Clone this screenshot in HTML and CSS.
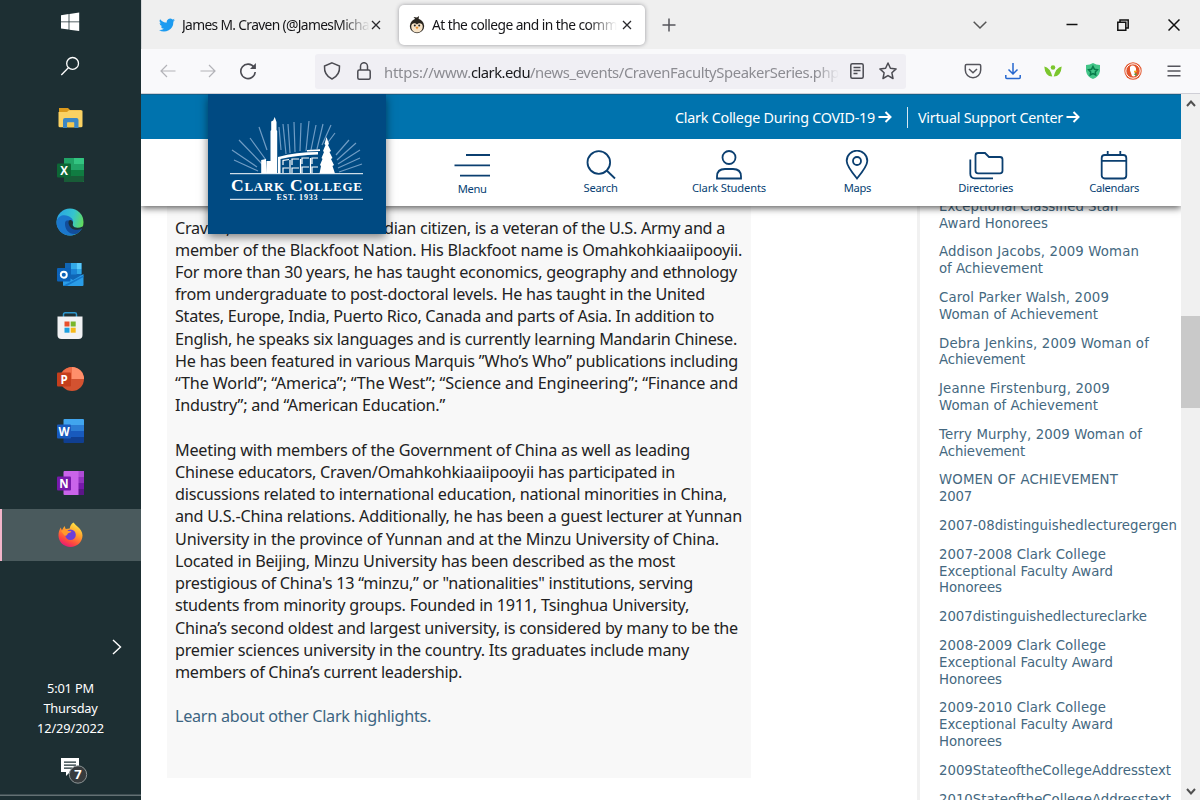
FILE: index.html
```html
<!DOCTYPE html>
<html lang="en">
<head>
<meta charset="utf-8">
<title>At the college and in the community</title>
<link rel="stylesheet" href="styles.css">
</head>
<body>
<div class="desktop">
  <aside class="taskbar">
    <div class="sys"><svg width="20" height="20" viewBox="0 0 20 20"><path fill="#fff" d="M1 3.200 8.600 2v7.400H1zM9.400 1.900 19.200.6v8.800H9.400zM1 10.200h7.600v7.400L1 16.600zM9.400 10.200h9.800v8.900l-9.800-1.300z"/></svg></div>
    <div class="sys"><svg width="20" height="20" viewBox="0 0 20 20" fill="none" stroke="#fff" stroke-width="1.300"><circle cx="12.600" cy="7.400" r="5.900"/><path d="M8.400 11.800 1.300 19"/></svg></div>
    <div class="apps">
      <div class="app"><svg width="28" height="28" viewBox="0 0 28 28"><path fill="#dc9a1c" d="M3 4h9l2 2h11v3H3z"/><path fill="#fbd263" d="M2.500 8h8.500l2-1.800h12.500q1 0 1 1V22q0 1.300-1.500 1.300H4Q2.500 23.300 2.500 22z"/><path fill="#3c87c5" d="M7 24v-8q0-2 2-2h11.500q2 0 2 2v8h-4.300v-5.500h-7V24z"/><path fill="#f6c94f" d="M11.500 18.500h6.500v4.800h-6.500z"/></svg></div>
      <div class="app"><svg width="28" height="28" viewBox="0 0 28 28"><path fill="#21a366" d="M8 2h20v24H8z"/><path fill="#33c481" d="M18 2h9q1 0 1 1v5H18z"/><path fill="#107c41" d="M8 14h20v6H8z"/><path fill="#185c37" d="M8 20h20v5q0 1-1 1H8z"/><rect x="1" y="7.500" width="14" height="14" rx="1" fill="#0d6635"/><text x="8" y="18.500" class="letter">X</text></svg></div>
      <div class="app"><svg width="28" height="28" viewBox="0 0 28 28"><defs><linearGradient id="e1" x1="0" x2="1" y1=".3" y2=".6"><stop stop-color="#2aa5e3"/><stop offset=".55" stop-color="#35c4cf"/><stop offset="1" stop-color="#66dc54"/></linearGradient></defs><circle cx="14" cy="14" r="13.500" fill="url(#e1)"/><path fill="#1b77cc" d="M.6 13C2 7.500 8 6 12 8c5 2 5.500 5 5 7-1 3 2 5 5 5 2 0 3.500-.5 4.500-1.500C24 25 18.500 27.500 14 27.500 6 27.500 0 21 .6 13z"/><path fill="#124d9a" d="M9 15c-.5 6 4 12 11 11 4-1.500 6.300-5.500 6.500-7-2.500 1.800-7 2.500-10 .5-2.500-1.700-3.500-4.500-2-7-3-.5-5.300 0-5.500 2.500z"/><path fill="#1d3035" d="M12.500 14.500c0-2 1.600-3 3.200-2 1.500 1 1.500 2.500 1 3.700-.4 1.500 1 3 3 3.400q4 .6 6.800-1.200l1 .8q-3 3.200-8 2.500c-4-.5-7-3.500-7-7.200z"/></svg></div>
      <div class="app"><svg width="28" height="28" viewBox="0 0 28 28"><path fill="#1066b5" d="M9 3h16.500V20H9z"/><path fill="#32a9e7" d="M15 3h5.500v6H15zM20.500 9h5v5h-5z"/><path fill="#5bcbfa" d="M20.500 3h5v6h-5z"/><path fill="#1b84d6" d="M15 9h5.500v5.500H15z"/><path fill="#2a9de8" d="M7 14.500 17 20l10.500-6V25q0 1-1 1H8q-1 0-1-1z"/><path fill="#1478cb" d="m7.500 25.500 20-10V17L11 26H8z"/><rect x="1" y="8" width="13.500" height="13.500" rx="1" fill="#0c62b8"/><circle cx="7.800" cy="14.700" r="3" fill="none" stroke="#fff" stroke-width="1.900"/></svg></div>
      <div class="app"><svg width="28" height="28" viewBox="0 0 28 28"><path d="M7.500 5V2.500q0-1.700 1.700-1.700h9.600q1.700 0 1.700 1.700V5" fill="none" stroke="#2d97ce" stroke-width="1.500"/><path fill="#f1f2f4" d="M1.500 4.500h25V23q0 4-4 4h-17q-4 0-4-4z"/><path fill="#e8502d" d="M8.500 9.500h5v5h-5z"/><path fill="#78b62c" d="M14.700 9.500h5v5h-5z"/><path fill="#1da0df" d="M8.500 15.700h5v5h-5z"/><path fill="#f5b91b" d="M14.700 15.700h5v5h-5z"/></svg></div>
      <div class="app"><svg width="28" height="28" viewBox="0 0 28 28"><circle cx="16" cy="14" r="12" fill="#d35230"/><path fill="#ff8f6b" d="M16 2a12 12 0 0 1 12 12H16z"/><path fill="#ed6c47" d="M16 2A12 12 0 0 0 4 14h12z"/><rect x="1" y="7.500" width="14" height="14" rx="1" fill="#c43e1c"/><text x="8" y="18.500" class="letter">P</text></svg></div>
      <div class="app"><svg width="28" height="28" viewBox="0 0 28 28"><path fill="#41a5ee" d="M7.500 3q0-1 1-1H27q1 0 1 1v5H7.500z"/><path fill="#2b7cd3" d="M7.500 8H28v6H7.500z"/><path fill="#185abd" d="M7.500 14H28v6H7.500z"/><path fill="#103f91" d="M7.500 20H28v5q0 1-1 1H8.500q-1 0-1-1z"/><rect x="1" y="7.500" width="14" height="14" rx="1" fill="#185abd"/><text x="8" y="18.500" class="letter">W</text></svg></div>
      <div class="app"><svg width="28" height="28" viewBox="0 0 28 28"><rect x="7.500" y="2" width="20.500" height="24" rx="1" fill="#ca64ea"/><path fill="#ae4bd5" d="M22.500 2H27q1 0 1 1v5h-5.500z"/><path fill="#9332bf" d="M22.500 8H28v6h-5.500z"/><path fill="#7719aa" d="M22.500 14H28v6h-5.500z"/><path fill="#5c1589" d="M22.500 20H28v6h-5.500z"/><rect x="1" y="7.500" width="14" height="14" rx="1" fill="#7719aa"/><text x="8" y="18.500" class="letter">N</text></svg></div>
      <div class="app active"><svg width="28" height="28" viewBox="0 0 28 28"><defs><linearGradient id="f1" x1=".8" y1="0" x2=".3" y2="1"><stop stop-color="#fff04a"/><stop offset=".4" stop-color="#ffa22c"/><stop offset=".75" stop-color="#ff4b3d"/><stop offset="1" stop-color="#e3167b"/></linearGradient></defs><path fill="url(#f1)" d="M17.500 1.500c1.500 2 3 3 4.500 4.500 2.500 2 4.500 5 4.500 8.500C26.500 21 21 26 14.500 26S2.500 21 2.500 14.500c0-3 .7-5.500 2.200-8l1.200 2.700L8.500 5l1.200 3 4-.5c.3-2.500 1.700-5 3.800-6z"/><circle cx="14.500" cy="13.800" r="5.300" fill="#6a3fd8"/><path fill="#ff9a2d" d="M5 10c3-2 5.500-1.500 7.500 0l3 .3c-.5 1.700-3.500 1.500-4 2.700-.3 1.500-1.500 2-3 1.500z"/></svg></div>
    </div>
    <div class="more"><svg width="12" height="18" viewBox="0 0 12 18" fill="none" stroke="#fff" stroke-width="1.400"><path d="m2 2 7.500 7L2 16"/></svg></div>
    <div class="clock"><span data-w="47">5:01 PM</span><span data-w="54">Thursday</span><span data-w="67">12/29/2022</span></div>
    <div class="notes"><svg width="30" height="30" viewBox="0 0 30 30"><path fill="#fff" d="M3 1h18v14h-9l-4 4v-4H3z"/><path stroke="#1d3035" stroke-width="1.200" d="M6 5.100h12M6 8.100h12M6 11.100h8"/><circle cx="20" cy="17.500" r="8.700" fill="#373b3d" stroke="#8c9495"/><text x="20" y="22" class="badge">7</text></svg></div>
  </aside>

  <main class="browser">
    <div class="tabs">
      <div class="tab">
        <svg width="16" height="16" viewBox="0 0 24 24"><path fill="#1d9bf0" d="M24 4.600a10 10 0 0 1-2.800.8 5 5 0 0 0 2.100-2.700 10 10 0 0 1-3.100 1.200 4.900 4.900 0 0 0-8.400 4.500A14 14 0 0 1 1.700 3.200a4.900 4.900 0 0 0 1.500 6.500 5 5 0 0 1-2.200-.6 4.900 4.900 0 0 0 3.900 4.900 5 5 0 0 1-2.200.1 4.900 4.900 0 0 0 4.600 3.400A10 10 0 0 1 0 19.500 14 14 0 0 0 21.500 7a10 10 0 0 0 2.500-2.400z"/></svg>
        <div class="tab-title"><span data-w="187">James M. Craven (@JamesMicha</span></div>
        <svg class="x" width="10" height="10" viewBox="0 0 10 10"><path d="m1 1 8 8M9 1 1 9"/></svg>
      </div>
      <div class="tab current">
        <svg width="16" height="18" viewBox="0 0 16 18"><circle cx="8" cy="10" r="7.200" fill="#29251f"/><path fill="#29251f" d="M7 4 4.500 1 8 1.500 10 0l-.5 4z"/><path fill="#f6e3c8" d="M2.300 11C1.800 7 6 6 8 8.500 10 6 14.200 7 13.700 11c0 7.200-11.400 7.200-11.400 0z"/><circle cx="5.800" cy="9.600" r="1" fill="#222"/><circle cx="10.200" cy="9.600" r="1" fill="#222"/><path fill="#e99234" d="m6.500 11.300 1.500-.8 1.500.8L8 13.500z"/></svg>
        <div class="tab-title"><span data-w="185">At the college and in the comm</span></div>
        <svg class="x" width="10" height="10" viewBox="0 0 10 10"><path d="m1 1 8 8M9 1 1 9"/></svg>
      </div>
      <svg class="plus" width="14" height="14" viewBox="0 0 14 14"><path d="M7 .5v13M.5 7h13"/></svg>
      <div class="window-buttons">
        <svg width="14" height="14" viewBox="0 0 14 14" stroke="#555"><path d="m.7 3.700 6.300 6.300 6.300-6.300"/></svg>
        <svg width="12" height="14" viewBox="0 0 12 14"><path d="M.5 6.500h11" stroke-width="1.500"/></svg>
        <svg width="12" height="12" viewBox="0 0 12 12"><path d="M.8 3.300h8v8h-8zM3 3V.9h8.200v8.200H9"/></svg>
        <svg width="12" height="12" viewBox="0 0 12 12"><path d="m.5.5 11 11M11.500.5l-11 11"/></svg>
      </div>
    </div>

    <div class="toolbar">
      <div class="history">
        <svg width="16" height="14" viewBox="0 0 16 14" stroke="#b3b3b8"><path d="M15.500 7H1M7 1 1 7l6 6"/></svg>
        <svg width="16" height="14" viewBox="0 0 16 14" stroke="#b3b3b8"><path d="M.5 7H15M9 1l6 6-6 6"/></svg>
        <svg class="reload" width="18" height="18" viewBox="0 0 18 18" stroke="#4b4b52"><path d="M15 5.300A7.200 7.200 0 1 0 16.200 10"/><path fill="#4b4b52" stroke="none" d="M16.900 1v6H11z"/></svg>
      </div>
      <div class="address">
        <svg width="18" height="18" viewBox="0 0 18 18"><path d="M9 .9 16.500 4c.4 6-2 10.500-7.500 13C3.500 14.500 1.100 10 1.500 4z"/></svg>
        <svg width="14" height="18" viewBox="0 0 14 18"><path d="M3.500 8V4.200a3.500 3.500 0 0 1 7 0V8"/><rect x=".8" y="8" width="12.400" height="9.200" rx="1.500"/></svg>
        <div class="url"><span data-w="87">https://www.</span><span class="host" data-w="59">clark.edu</span><span data-w="309">/news_events/CravenFacultySpeakerSeries.php</span></div>
        <svg width="14" height="16" viewBox="0 0 14 16"><rect x=".8" y=".8" width="12.400" height="14.400" rx="1.500"/><path d="M3.500 4.500h7M3.500 7.500h7M3.500 10.500h4"/></svg>
        <svg width="18" height="18" viewBox="0 0 18 18"><path stroke-linejoin="round" d="m9 1 2.400 5.200 5.700.7-4.200 3.900 1.100 5.700-5-2.900-5 2.900 1.100-5.700L.9 6.900l5.700-.7z"/></svg>
      </div>
      <div class="extensions">
        <svg width="18" height="16" viewBox="0 0 18 16" stroke="#55555c"><path d="M2.500 1.500h13q1.200 0 1.200 1.200V7A7.700 7.700 0 0 1 1.300 7V2.700q0-1.200 1.200-1.200zM5 6l4 3.800L13 6"/></svg>
        <svg width="18" height="18" viewBox="0 0 18 18" stroke="#2567cf"><path d="M9 1v11M4.500 7.500 9 12l4.500-4.500M1.800 13v2.500q0 1 1 1h12.400q1 0 1-1V13"/></svg>
        <svg width="18" height="14" viewBox="0 0 18 14" stroke="none"><g fill="#7bc62d"><circle cx="9" cy="3.500" r="2.300"/><path d="M.3 2.500Q6 3.500 8.300 12.500 1 12.500.3 2.500zM17.700 2.500Q12 3.500 9.700 12.500q7.300 0 8-10z"/></g></svg>
        <svg width="18" height="16" viewBox="-1 0 18 16" stroke="none"><path fill="#43c588" d="M8 0q3 2 7 2v6q-1 6-7 8-6-2-7-8V2q4 0 7-2z"/><path fill="none" stroke="#087b4a" d="m8 3.500 1.400 2.700 3 .5L10.300 9l.4 3L8 10.600 5.300 12l.4-3-2.100-2.300 3-.5z"/></svg>
        <svg width="18" height="18" viewBox="0 0 18 18" stroke="none"><circle cx="9" cy="9" r="8.700" fill="#e2562d"/><circle class="ring" cx="9" cy="9" r="7.200"/><path fill="#fff" d="M6 5q2-2.500 5-.5 1.500 1.500 1 4l-1.500 1.500 1 3.500q-1.500 1.500-3.500.5Q7 11 6 8.500z"/><path fill="#f4b51c" d="M10 8.700h3.500l-1.500 1.500h-2z"/><path fill="#45a34a" d="m9.500 12 3-.7V14z"/></svg>
        <svg width="18" height="12" viewBox="-3 0 18 12" stroke="#55555c"><path d="M.5 1.200h13M.5 6h13M.5 10.800h13"/></svg>
      </div>
    </div>

    <div class="viewport">
      <div class="page">
        <header class="site-header">
          <div class="notice">
            <a><span data-w="200">Clark College During COVID-19</span><svg width="14" height="12" viewBox="0 0 14 12"><path d="M.5 6H12M7.500 1l5 5-5 5"/></svg></a>
            <a class="second"><span data-w="145">Virtual Support Center</span><svg width="14" height="12" viewBox="0 0 14 12"><path d="M.5 6H12M7.500 1l5 5-5 5"/></svg></a>
          </div>
          <nav class="site-nav">
            <a><svg width="36" height="30" viewBox="0 0 36 30"><path d="M12 5h24M.5 15.300H36M6 25.700h30"/></svg><span class="low" data-w="29">Menu</span></a>
            <a><svg width="30" height="30" viewBox="0 0 30 30"><circle cx="12.800" cy="12.500" r="11.300"/><path d="m20.700 20.500 8.300 8"/></svg><span data-w="34">Search</span></a>
            <a><svg width="26" height="30" viewBox="0 0 26 30"><circle cx="13" cy="7.500" r="6.500"/><path d="M1 28.500v-2q0-7.500 8-7.500h8q8 0 8 7.500v2z"/></svg><span data-w="74">Clark Students</span></a>
            <a><svg width="24" height="30" viewBox="0 0 24 30"><path d="M12 28.500Q1.700 16 1.700 11a10.300 10.300 0 0 1 20.600 0q0 5-10.300 17.500z"/><circle cx="12" cy="11" r="4"/></svg><span data-w="27">Maps</span></a>
            <a><svg width="36" height="30" viewBox="0 0 36 30"><path d="M7.500 5.500q0-2.500 2.500-2.500h7l4 4h11q2.500 0 2.500 2.500v11.300q0 2.500-2.500 2.500H10q-2.500 0-2.500-2.500zM2.300 9.500v14.300q0 4.500 4.500 4.500H25"/></svg><span data-w="55">Directories</span></a>
            <a><svg width="28" height="30" viewBox="0 0 28 30"><rect x="1.700" y="5" width="24.600" height="23.500" rx="3"/><path d="M1.700 10.800h24.600M7.700 1v4M20.300 1v4"/></svg><span data-w="50">Calendars</span></a>
          </nav>
          <a class="logo">
            <svg width="178" height="140" viewBox="208 94 178 140">
              <g stroke="#6f9cc4" stroke-width="1.200">
                <path d="M258 171 234 160M257 167l-25-17M262 164l-23-24M266 160l-16-22M267 150l-8-23M281 150l-2-23M286 154l-3-30M290 153l-2-29M295 152l-1-30M300 151l1-28M306 151l3-30M311 150l5-25M317 149l6-25M322 145l9-20M326 145l9-12M336 155l13-15M337 160l19-17M338 164l22-14M338 168l22-10M339 172l23-8"/>
              </g>
              <g fill="#fff">
                <path d="m274.700 117 1.800 5v8l.7 1v42.500h-6.700V131l.7-1v-8.500l2-1zM266.500 161h4.500v12.500h-5zM261.200 160l4.800-1v14.500h-4.800zM326.500 137l2.500 7-1 1 3 6-1.500 1 3 6-1.500 1 3 6-1.500 1 2.500 7.500h-15.500l1.500-7.500-1-1 2.500-6-1-1 2.500-6-1-1 2.500-6-1-1z"/>
                <path d="M278 157q18-5 40-5v2.500q-21 .5-37.500 4.500v14.500H278zM307 150l13-.7v1.700l-13 .5z"/>
              </g>
              <g fill="none" stroke="#fff" stroke-width="1.200"><path d="M283 173v-5h6M283 165v-4.500l6-1M292 173v-5h7M292 165v-6h7M302 173v-6h7M302 164v-6h7M312 173v-6h6M312 164v-6h6M290 160v13M300.500 159v14M310.500 158v15"/><path d="M230 173.700h133M230 199.300h41M322 199.300h41" stroke-width="1"/></g>
              <text class="college" x="231" y="191" textLength="131" lengthAdjust="spacing">C<tspan class="sc">LARK</tspan> C<tspan class="sc">OLLEGE</tspan></text>
              <text class="est" x="276.500" y="199.700" textLength="41">EST. 1933</text>
            </svg>
          </a>
        </header>
        <div class="content">
          <article class="article">
            <p>
              <span class="line"><span data-w="55">Craven,</span><span data-w="154">&nbsp;a U.S. and Cana</span><span data-w="341">dian citizen, is a veteran of the U.S. Army and a</span></span>
              <span class="line"><span data-w="567">member of the Blackfoot Nation. His Blackfoot name is Omahkohkiaaiipooyii.</span></span>
              <span class="line"><span data-w="562">For more than 30 years, he has taught economics, geography and ethnology</span></span>
              <span class="line"><span data-w="530">from undergraduate to post-doctoral levels. He has taught in the United</span></span>
              <span class="line"><span data-w="539">States, Europe, India, Puerto Rico, Canada and parts of Asia. In addition to</span></span>
              <span class="line"><span data-w="562">English, he speaks six languages and is currently learning Mandarin Chinese.</span></span>
              <span class="line"><span data-w="563">He has been featured in various Marquis ”Who’s Who” publications including</span></span>
              <span class="line"><span data-w="563">“The World”; “America”; “The West”; “Science and Engineering”; “Finance and</span></span>
              <span class="line"><span data-w="270">Industry”; and “American Education.”</span></span>
            </p>
            <p>
              <span class="line"><span data-w="515">Meeting with members of the Government of China as well as leading</span></span>
              <span class="line"><span data-w="500">Chinese educators, Craven/Omahkohkiaaiipooyii has participated in</span></span>
              <span class="line"><span data-w="552">discussions related to international education, national minorities in China,</span></span>
              <span class="line"><span data-w="567">and U.S.-China relations. Additionally, he has been a guest lecturer at Yunnan</span></span>
              <span class="line"><span data-w="544">University in the province of Yunnan and at the Minzu University of China.</span></span>
              <span class="line"><span data-w="500">Located in Beijing, Minzu University has been described as the most</span></span>
              <span class="line"><span data-w="518">prestigious of China's 13 “minzu,” or "nationalities" institutions, serving</span></span>
              <span class="line"><span data-w="514">students from minority groups. Founded in 1911, Tsinghua University,</span></span>
              <span class="line"><span data-w="563">China’s second oldest and largest university, is considered by many to be the</span></span>
              <span class="line"><span data-w="514">premier sciences university in the country. Its graduates include many</span></span>
              <span class="line"><span data-w="287">members of China’s current leadership.</span></span>
            </p>
            <p><a class="line link"><span data-w="256">Learn about other Clark highlights.</span></a></p>
          </article>
          <ul class="related">
            <li><span data-w="180">Exceptional Classified Staff</span><br><span data-w="109">Award Honorees</span></li>
            <li><span data-w="200">Addison Jacobs, 2009 Woman</span><br><span data-w="104">of Achievement</span></li>
            <li><span data-w="170">Carol Parker Walsh, 2009</span><br><span data-w="159">Woman of Achievement</span></li>
            <li><span data-w="210">Debra Jenkins, 2009 Woman of</span><br><span data-w="86">Achievement</span></li>
            <li><span data-w="171">Jeanne Firstenburg, 2009</span><br><span data-w="159">Woman of Achievement</span></li>
            <li><span data-w="203">Terry Murphy, 2009 Woman of</span><br><span data-w="86">Achievement</span></li>
            <li><span data-w="179">WOMEN OF ACHIEVEMENT</span><br><span data-w="33">2007</span></li>
            <li><span data-w="238">2007-08distinguishedlecturegergen</span></li>
            <li><span data-w="167">2007-2008 Clark College</span><br><span data-w="174">Exceptional Faculty Award</span><br><span data-w="63">Honorees</span></li>
            <li><span data-w="208">2007distinguishedlectureclarke</span></li>
            <li><span data-w="167">2008-2009 Clark College</span><br><span data-w="174">Exceptional Faculty Award</span><br><span data-w="63">Honorees</span></li>
            <li><span data-w="167">2009-2010 Clark College</span><br><span data-w="174">Exceptional Faculty Award</span><br><span data-w="63">Honorees</span></li>
            <li><span data-w="232">2009StateoftheCollegeAddresstext</span></li>
            <li><span data-w="232">2010StateoftheCollegeAddresstext</span></li>
          </ul>
        </div>
      </div>
      <div class="scrollbar">
        <svg width="10" height="7" viewBox="0 0 10 7"><path d="m1 6 4-4.500L9 6"/></svg>
        <div class="track"><div class="thumb"></div></div>
        <svg width="10" height="7" viewBox="0 0 10 7"><path d="m1 1 4 4.500L9 1"/></svg>
      </div>
    </div>
  </main>
</div>
<script src="fit.js"></script>
</body>
</html>
```
FILE: styles.css
```css
* { box-sizing: border-box; }
body { margin: 0; font-family: "Noto Sans", "Open Sans", sans-serif; overflow: hidden; }
svg { display: block; flex: none; }
p, ul { margin: 0; padding: 0; }
[data-w] { display: inline-block; white-space: pre; }

.desktop { display: flex; width: 1200px; height: 800px; overflow: hidden; }

/* Taskbar */
.taskbar { width: 141px; flex: none; display: flex; flex-direction: column; align-items: center; background: #1d2f33; color: #fff; }
.sys { height: 44px; display: flex; align-items: center; padding-right: 1px; }
.apps { width: 100%; padding-top: 4px; }
.app { height: 52.1px; display: flex; align-items: center; justify-content: center; padding-right: 2px; }
.app.active { background: #4a5a5d; border-left: 2px solid #f3b4c9; padding-right: 4px; }
.letter { font: bold 11.5px "Open Sans", sans-serif; fill: #fff; text-anchor: middle; }
.more { align-self: flex-end; padding: 77px 18px 0 0; }
.clock { display: flex; flex-direction: column; align-items: center; margin-top: 22px; font-size: 12.800px; line-height: 20px; }
.notes { flex: 1; width: 100%; padding: 19px 0 0 58px; box-shadow: inset 0 -4px #1d2f33, inset 0 -5.500px #647174; }
.badge { font: bold 13px "Open Sans", sans-serif; fill: #fff; text-anchor: middle; }

/* Browser chrome */
.browser { flex: 1; min-width: 0; display: flex; flex-direction: column; background: #fff; }
.tabs { height: 49px; flex: none; display: flex; align-items: center; background: #efefef; border-left: 1px solid #d8dadc; }
.tab { width: 246px; height: 40px; display: flex; align-items: center; padding-left: 17px; font-size: 13.800px; color: #151518; }
.tab + .tab { margin-left: 11px; }
.current { background: #fff; border-radius: 5px; box-shadow: 0 0 4px #9a9a9f; padding-left: 10px; }
.tab-title { width: 188px; margin: 0 1px 0 7px; overflow: hidden; -webkit-mask-image: linear-gradient(90deg, #000 84%, transparent); mask-image: linear-gradient(90deg, #000 84%, transparent); }
.current .tab-title { width: 185px; margin-right: 5px; }
.x, .plus { fill: none; stroke: #29292d; stroke-width: 1.300; }
.plus { stroke: #55555c; margin-left: 17px; stroke-width: 1.500; }
.window-buttons { margin-left: auto; padding-right: 20px; display: flex; align-items: center; fill: none; stroke: #111; stroke-width: 1.500; gap: 39px; }
.window-buttons svg:first-child { margin-right: 40px; }

.toolbar { height: 45px; flex: none; display: flex; align-items: center; background: #f9f9fb; border-bottom: 1px solid #cfcfd6; fill: none; }
.toolbar svg { stroke-width: 1.500; }
.history { width: 174px; padding-left: 19px; display: flex; align-items: center; gap: 24px; }
.history svg { stroke-width: 1.200; }
.history .reload { stroke-width: 1.600; margin-left: -1px; }
.ring { fill: none; stroke: #fff; stroke-width: 1; }
.address { width: 591px; height: 35px; background: #f0eff4; border-radius: 3px; display: flex; align-items: center; padding-left: 8px; stroke: #4b4b52; }
.address > svg:nth-of-type(2) { margin-left: 16px; }
.url { width: 455px; padding-top: 1px; margin: 0 11px 0 13px; overflow: hidden; white-space: nowrap; font-size: 14.800px; color: #8c8c92; -webkit-mask-image: linear-gradient(90deg, #000 95%, transparent); mask-image: linear-gradient(90deg, #000 95%, transparent); }
.host { color: #19191c; }
.address > svg:last-child { margin-left: 15px; }
.extensions { flex: 1; display: flex; align-items: center; justify-content: space-between; padding: 0 18px 0 58px; }

/* Page */
.viewport { flex: 1; min-height: 0; display: flex; }
.page { width: 1040px; height: 706px; overflow: hidden; position: relative; display: flex; flex-direction: column; }
.site-header { height: 112px; flex: none; position: relative; z-index: 2; background: #fff; box-shadow: 0 2px 7px rgba(0,0,0,.65); }
.notice { height: 45px; background: #0073ae; border-top: 1px solid #12618c; color: #fff; display: flex; justify-content: flex-end; align-items: center; padding-right: 101px; font-size: 14.300px; }
.notice a { display: flex; align-items: center; gap: 3px; height: 21px; }
.notice svg { fill: none; stroke: #fff; stroke-width: 2; }
.second { border-left: 1px solid #d6e8f2; margin-left: 15px; padding-left: 10px; }
.site-nav { display: flex; padding-left: 267px; }
.site-nav a { width: 128.400px; flex: none; display: flex; flex-direction: column; align-items: center; padding-top: 11px; color: #073f73; font-size: 11.200px; line-height: 15px; }
.site-nav svg { fill: none; stroke: #0b3f70; stroke-width: 1.800; }
.low { padding-top: 1px; }
.logo { position: absolute; left: 67px; top: 0; width: 178px; height: 140px; background: #004a82; box-shadow: 0 3px 9px rgba(0,0,0,.5); }
.college { font: 600 17.500px "Liberation Serif", serif; fill: #fff; }
.sc { font-size: 13px; }
.est { font: bold 8px "Liberation Serif", serif; fill: #fff; }

.content { display: flex; flex: 1; min-height: 0; }
.article { width: 584px; height: 572px; flex: none; margin-left: 26px; padding: 10.600px 0 0 8px; background: #f8f8f8; color: #222; font-size: 16.200px; line-height: 22.220px; }
.article p { margin-bottom: 22.220px; }
.line { display: block; height: 22.220px; white-space: nowrap; }
.link { color: #3d6582; }
.related { list-style: none; margin-left: 166px; width: 264px; flex: none; height: 620px; margin-top: -16px; padding: 8.900px 0 0 19px; border-left: 3px solid #f1f1f1; font: 13.300px/16.700px "DejaVu Sans", sans-serif; color: #446880; white-space: nowrap; }
.related li { margin-bottom: 12.200px; }

.scrollbar { width: 19px; flex: none; background: #f0f0f0; display: flex; flex-direction: column; align-items: center; padding: 6px 0 5px; }
.scrollbar svg { fill: none; stroke: #505050; stroke-width: 2; }
.track { flex: 1; width: 100%; padding-top: 209px; }
.thumb { height: 92px; background: #c9c9c9; }
```
FILE: fit.js
```js
// Tracks each run of text so that it fills its measure.
document.querySelectorAll('[data-w]').forEach(function (el) {
  var target = parseFloat(el.dataset.w);
  var natural = el.getBoundingClientRect().width;
  el.style.letterSpacing = (target - natural) / el.textContent.length + 'px';
});
```
